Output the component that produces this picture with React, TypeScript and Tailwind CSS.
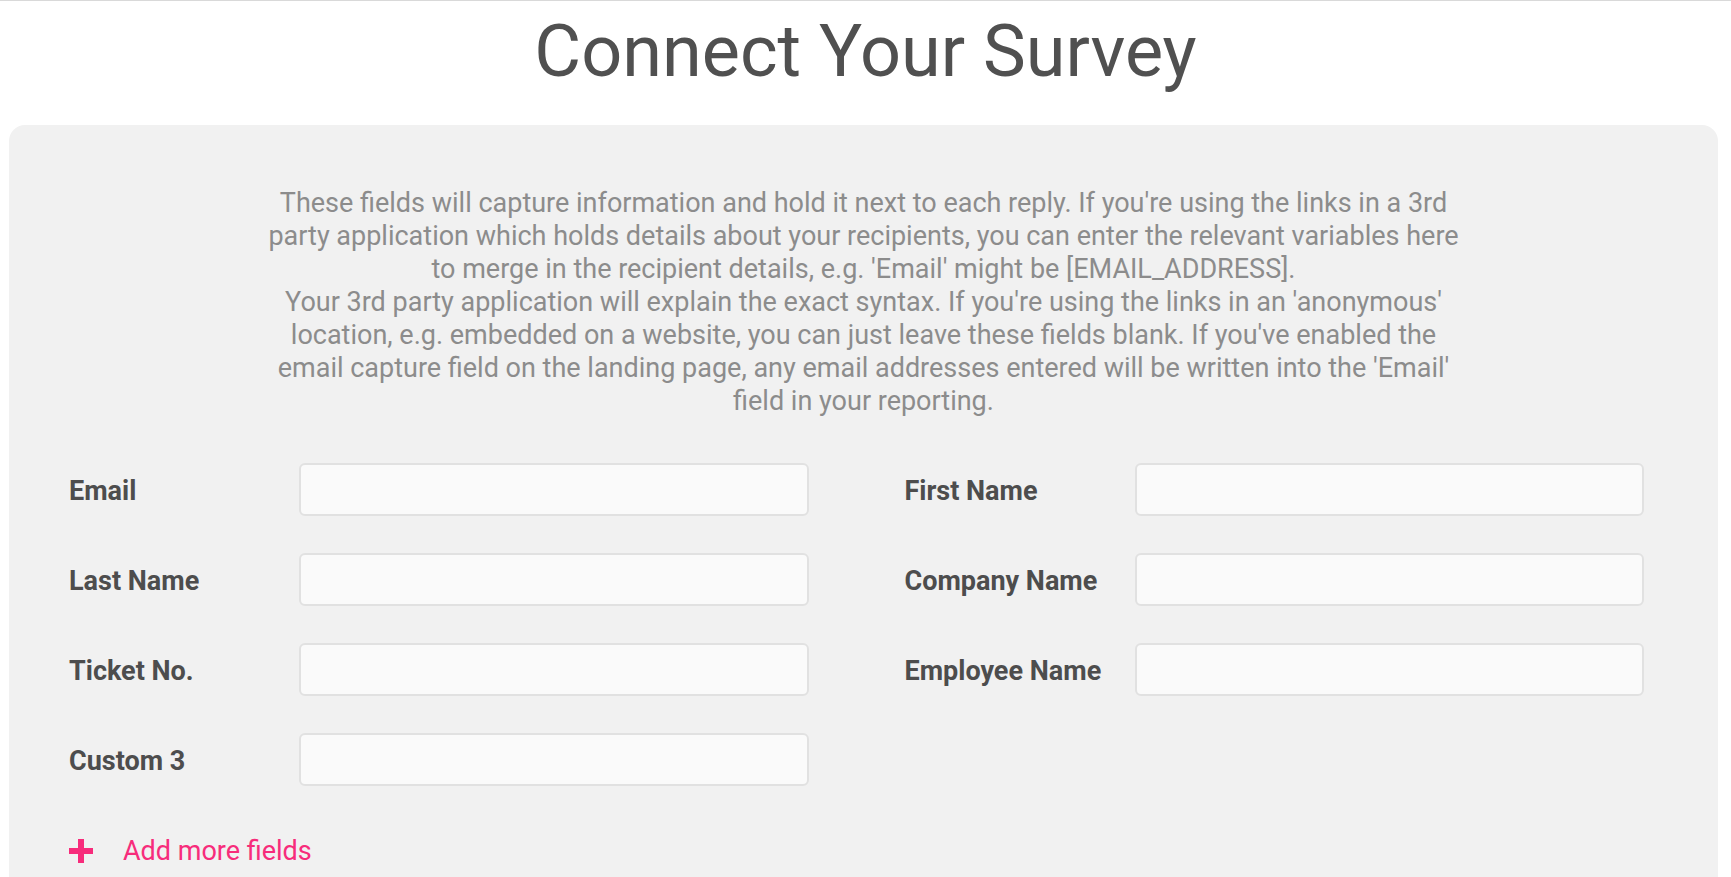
import React from 'react';

const leftFields = ['Email', 'Last Name', 'Ticket No.', 'Custom 3'];
const rightFields = ['First Name', 'Company Name', 'Employee Name'];

const Field: React.FC<{ label: string }> = ({ label }) => (
  <div className="flex items-center">
    <label className="w-[230px] shrink-0 pt-[3px] text-[27px] font-bold text-[#4d4d4d]">{label}</label>
    <input
      type="text"
      className="h-[53px] flex-1 rounded-[6px] border-2 border-[#e1e1e1] bg-[#fafafa] px-3 outline-none"
    />
  </div>
);

export default function App() {
  return (
    <div className="min-h-screen border-t border-[#d9d9d9] bg-white font-['Roboto',sans-serif]">
      <h1 className="pt-[9px] text-center text-[72px] leading-[84px] font-normal text-[#505050]">
        Connect Your Survey
      </h1>
      <div className="ml-[9px] mr-[13px] mt-[31px] rounded-[16px] bg-[#f1f1f1] pt-[62px] pb-10">
        <p className="mx-auto max-w-[1200px] text-center text-[27px] leading-[33px] text-[#8c8c8c]">
          These fields will capture information and hold it next to each reply. If you're using the links in a 3rd
          party application which holds details about your recipients, you can enter the relevant variables here to
          merge in the recipient details, e.g. 'Email' might be [EMAIL_ADDRESS].
          <br />
          Your 3rd party application will explain the exact syntax. If you're using the links in an 'anonymous'
          location, e.g. embedded on a website, you can just leave these fields blank. If you've enabled the email
          capture field on the landing page, any email addresses entered will be written into the 'Email' field in
          your reporting.
        </p>

        <div className="pl-[60px] pr-[74px]">
          <div className="mt-[45px] grid grid-cols-2 gap-x-[96px]">
            <div className="flex flex-col gap-[37px]">
              {leftFields.map((f) => (
                <Field key={f} label={f} />
              ))}
            </div>
            <div className="flex flex-col gap-[37px]">
              {rightFields.map((f) => (
                <Field key={f} label={f} />
              ))}
            </div>
          </div>

          <button type="button" className="mt-[50px] flex items-center gap-[30px] text-[#f72c7b]">
            <svg width="24" height="24" viewBox="0 0 24 24" aria-hidden>
              <rect x="9" y="0" width="6" height="24" fill="currentColor" />
              <rect x="0" y="9" width="24" height="6" fill="currentColor" />
            </svg>
            <span className="text-[27px] leading-[30px]">Add more fields</span>
          </button>
        </div>
      </div>
    </div>
  );
}
